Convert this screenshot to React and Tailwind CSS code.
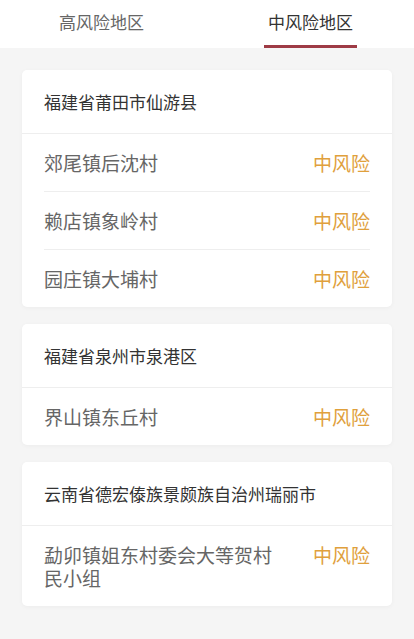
const FONT = '"Noto Sans CJK SC", "Noto Sans", sans-serif'

const GROUPS = [
  {
    city: '福建省莆田市仙游县',
    places: ['郊尾镇后沈村', '赖店镇象岭村', '园庄镇大埔村'],
  },
  {
    city: '福建省泉州市泉港区',
    places: ['界山镇东丘村'],
  },
  {
    city: '云南省德宏傣族景颇族自治州瑞丽市',
    places: ['勐卯镇姐东村委会大等贺村民小组'],
  },
]

function Tabs() {
  return (
    <div className="bg-white h-[48px] flex">
      <div className="flex-1 flex justify-center">
        <div className="pt-[10px] text-[17px] leading-[24px] text-[#666] pr-[4px]">高风险地区</div>
      </div>
      <div className="flex-1 flex justify-center">
        <div className="relative pt-[10px] px-[4px] text-[17px] leading-[24px] text-[#333]">
          中风险地区
          <span className="absolute left-0 right-0 top-[45px] h-[3px] bg-[#9e3b45]" />
        </div>
      </div>
    </div>
  )
}

function GroupCard({ city, places }) {
  return (
    <div className="bg-white rounded-[5px] shadow-[0_1px_4px_rgba(0,0,0,0.04)]">
      <div className="px-[22px] py-[20px] text-[17px] leading-[23px] text-[#333] border-b border-[#eeeeee]">
        {city}
      </div>
      <div className="px-[22px]">
        {places.map((p, i) => (
          <div
            key={p}
            className={`flex items-start justify-between py-[17px] ${i < places.length - 1 ? 'border-b border-[#eeeeee]' : ''}`}
          >
            <div className="w-[240px] text-[19px] leading-[23px] text-[#666]">{p}</div>
            <div className="text-[19px] leading-[23px] text-[#e0a03c]">中风险</div>
          </div>
        ))}
      </div>
    </div>
  )
}

export default function App() {
  return (
    <div className="min-h-[639px] bg-[#f5f5f5]" style={{ fontFamily: FONT }}>
      <Tabs />
      <div className="px-[22px] pt-[22px] pb-[30px] flex flex-col gap-[17px]">
        {GROUPS.map((g) => (
          <GroupCard key={g.city} city={g.city} places={g.places} />
        ))}
      </div>
    </div>
  )
}
